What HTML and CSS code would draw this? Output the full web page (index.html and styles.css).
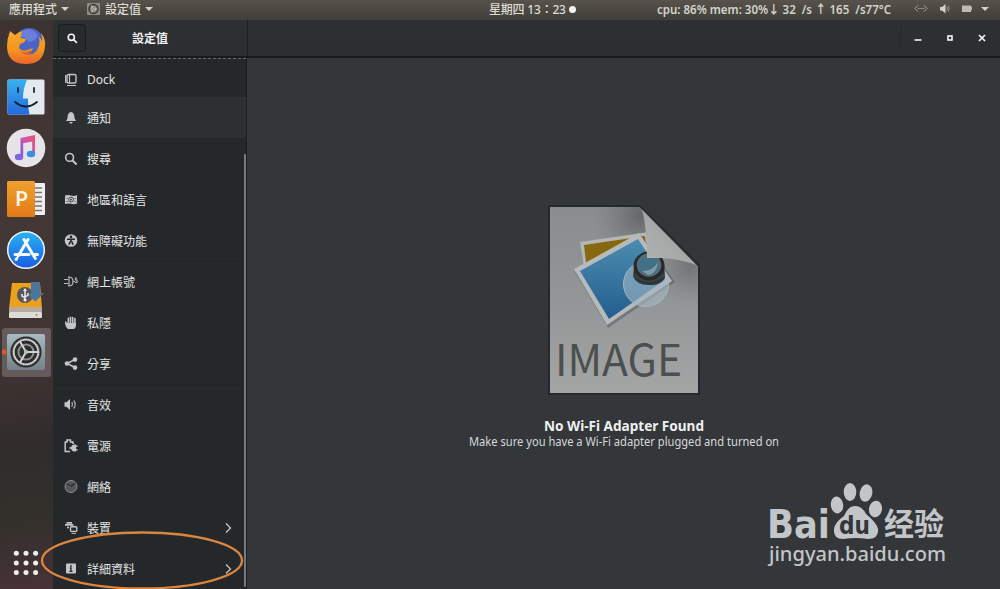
FILE: index.html
```html
<!DOCTYPE html>
<html lang="zh-Hant">
<head>
    <meta charset="UTF-8">
    <meta name="viewport" content="width=device-width, initial-scale=1.0">
    <title>設定值</title>
    <link rel="stylesheet" href="styles.css">
</head>
<body>

    <header class="topbar">
        <div class="topbar-left">
            <span>應用程式</span>
            <i class="arrow"></i>
            <svg class="app-icon" width="13" height="13" viewBox="0 0 13 13">
                <rect width="13" height="12" rx="1" fill="#8e8c86"/>
                <circle cx="6.5" cy="6" r="4.6" fill="#6b6963" stroke="#3b3935" stroke-width="1.3"/>
                <circle cx="6.5" cy="6" r="2.4" fill="none" stroke="#c9c7c1" stroke-width=".8"/>
                <path d="M6.5 6H10M6.5 6l-2-3.500M6.5 6l-2 3.500" stroke="#d6d4ce" stroke-width=".8"/>
            </svg>
            <span>設定值</span>
            <i class="arrow"></i>
        </div>
        <div class="clock">星期四 13：23<i class="dot"></i></div>
        <div class="stats">
            <svg width="240" height="20" viewBox="0 0 240 20"><text x="0" y="14" textLength="234" lengthAdjust="spacingAndGlyphs" xml:space="preserve">cpu: 86% mem: 30%↓ 32  /s ↑ 165  /s77°C</text></svg>
        </div>
        <div class="tray">
            <svg width="14" height="10" viewBox="0 0 14 10" fill="none" stroke="#aaa8a0"><path d="M4 1.500L1 4.500l3 3M10 1.500l3 3-3 3M4 4.500h1.500M6.400 4.500h1.500M8.700 4.500h1.500"/></svg>
            <svg width="10" height="10" viewBox="0 0 10 10"><path d="M0 3h2L5.500 0v9.500L2 6.500H0z" fill="#d4d2cc"/><path d="M6.800 3q1.200 1.700 0 3.500M8.200 1.700q2 3 0 6" fill="none" stroke="#97958e"/></svg>
            <svg width="10" height="10" viewBox="0 0 10 10"><path d="M0 1.500h9v1.300h1v3.500H9V8H0z" fill="#bcbab3"/></svg>
            <i class="arrow"></i>
        </div>
    </header>

    <div class="desktop">
        <nav class="dock">
            <div class="dock-item">
                <svg width="40" height="40" viewBox="0 0 40 40">
                    <defs><linearGradient id="fox" x1="0" y1="0" x2="0" y2="1"><stop offset="0" stop-color="#f6a92a"/><stop offset=".55" stop-color="#f5961f"/><stop offset="1" stop-color="#e9652a"/></linearGradient></defs>
                    <circle cx="23" cy="17" r="15" fill="#4a63c4"/>
                    <path d="M18 4q8-3 14 5l-3 5-6 2-5-5-5 1z" fill="#6a7fdc"/>
                    <path d="M4 5l5 4q3-3 8-4-2 2-2 5l-1 2q3 0 6 1 0 3-6 5l-1 4q3 4 8 2l6-2q-2 6-7 6 9 2 12-6 3-7 0-12 3 2 4 6 1-4-1-9 5 6 4 13-1 18-19 18Q1 38 1 20q0-7 3-15z" fill="url(#fox)"/>
                    <path d="M13 23q3 5 8 3l5-2-3 4q-7 2-10-5z" fill="#dd5f1e"/>
                </svg>
            </div>
            <div class="dock-item">
                <svg width="38" height="36" viewBox="0 0 38 36">
                    <defs><linearGradient id="face" x1="0" y1="0" x2="0" y2="1"><stop offset="0" stop-color="#38b2ee"/><stop offset="1" stop-color="#2269df"/></linearGradient></defs>
                    <rect x=".5" y=".5" width="37" height="35" rx="1.5" fill="#e2e9ef"/>
                    <path d="M2 .5h18q-4 9-4 19h5q-.4 8 1.500 16H2q-1.500 0-1.500-1.500V2Q.5.5 2 .5z" fill="url(#face)"/>
                    <path d="M11 9v4M27 9v4" stroke="#1d2735" stroke-width="1.8" stroke-linecap="round"/>
                    <path d="M8 23q11 9 22 0" fill="none" stroke="#15202e" stroke-width="1.8" stroke-linecap="round"/>
                </svg>
            </div>
            <div class="dock-item">
                <svg width="40" height="40" viewBox="0 0 40 40">
                    <defs><linearGradient id="note" x1="1" y1="0" x2="0" y2="1"><stop offset="0" stop-color="#f4505e"/><stop offset=".5" stop-color="#cc55b6"/><stop offset="1" stop-color="#6c61d8"/></linearGradient></defs>
                    <circle cx="20" cy="20" r="19.3" fill="#e6e4e8"/>
                    <path d="M14.500 10l14.500-3v19h-2.800V13.500l-9 1.800V29h-2.700z" fill="url(#note)"/>
                    <ellipse cx="13" cy="29" rx="4.200" ry="3.300" fill="#8065dc"/>
                    <ellipse cx="25" cy="26" rx="4.200" ry="3.300" fill="#378fe4"/>
                </svg>
            </div>
            <div class="dock-item">
                <svg width="40" height="38" viewBox="0 0 40 38">
                    <defs><linearGradient id="ppt" x1="0" y1="0" x2="0" y2="1"><stop offset="0" stop-color="#f0a02e"/><stop offset="1" stop-color="#e27b16"/></linearGradient></defs>
                    <rect x="26" y="3" width="13" height="32" rx="1" fill="#efefed"/>
                    <path d="M29 8h7M29 12.500h7M29 17h7M29 21.500h7M29 26h7M29 30.500h7" stroke="#777473" stroke-width="1.4"/>
                    <rect x="1" y="1" width="28" height="36" rx="1.5" fill="url(#ppt)"/>
                    <text x="9.3" y="26" class="ppt-letter">P</text>
                </svg>
            </div>
            <div class="dock-item">
                <svg width="40" height="40" viewBox="0 0 40 40">
                    <defs><linearGradient id="store" x1="0" y1="0" x2="0" y2="1"><stop offset="0" stop-color="#28b3f2"/><stop offset="1" stop-color="#195ce2"/></linearGradient></defs>
                    <circle cx="20" cy="20" r="18.3" fill="url(#store)" stroke="#eef4fa" stroke-width="1.5"/>
                    <path d="M18 9.500l11.300 19M22 9.500L12.200 26M9 24.500h14M27 24.500h4.500M10.700 28.500l-.6 1" stroke="#f6fafd" stroke-width="3" stroke-linecap="round"/>
                </svg>
            </div>
            <div class="dock-item">
                <svg width="38" height="40" viewBox="0 0 38 40">
                    <path d="M5 2h28l2 26H2z" fill="#eca11d"/>
                    <path d="M2.300 26h32.400l.3 5H2z" fill="#b6aaa0"/>
                    <rect x="2" y="31" width="33" height="6" rx="1" fill="#dcdcdb"/>
                    <circle cx="29.5" cy="34" r="1" fill="#7ba35b"/>
                    <circle cx="18" cy="14" r="8" fill="#54565a"/>
                    <path d="M18 9v11M15 13v2l3 2M21 12v2l-3 2" stroke="#ececec" stroke-width="1.5" fill="none"/>
                    <circle cx="18" cy="19" r="1.6" fill="#ececec"/><path d="M16 10l2-3 2 3z" fill="#ececec"/>
                    <path d="M24 1h9v11h4l-8.500 8.500-7-6L24 12z" fill="#4b759d"/>
                </svg>
            </div>
            <div class="dock-item">
                <div class="dock-active">
                    <svg width="38" height="36" viewBox="0 0 38 36">
                        <defs><linearGradient id="steel" x1="0" y1="0" x2="0" y2="1"><stop offset="0" stop-color="#a9bac2"/><stop offset="1" stop-color="#758087"/></linearGradient></defs>
                        <rect width="38" height="36" rx="2" fill="url(#steel)"/>
                        <circle cx="19" cy="18" r="15.6" fill="#2b2d2f"/>
                        <circle cx="19" cy="18" r="12.3" fill="none" stroke="#d2d2cf" stroke-width="1.8"/>
                        <circle cx="19" cy="18" r="13.5" fill="none" stroke="#999" stroke-width="1" stroke-dasharray="1 1.1"/>
                        <circle cx="19" cy="18" r="7.6" fill="none" stroke="#8d9090" stroke-width="2"/>
                        <path d="M19 18h12M19 18L13 7.500M19 18l-6 10.500" stroke="#d2d2cf" stroke-width="2"/>
                        <circle cx="19" cy="18" r="2.2" fill="#b8b9b7"/>
                    </svg>
                </div>
            </div>
            <svg class="app-grid" width="26" height="26" viewBox="0 0 26 26" fill="#f1efed">
                <circle cx="3.3" cy="3.3" r="2.5"/><circle cx="13" cy="3.3" r="2.5"/><circle cx="22.6" cy="3.3" r="2.5"/>
                <circle cx="3.3" cy="13" r="2.5"/><circle cx="13" cy="13" r="2.5"/><circle cx="22.6" cy="13" r="2.5"/>
                <circle cx="3.3" cy="22.6" r="2.5"/><circle cx="13" cy="22.6" r="2.5"/><circle cx="22.6" cy="22.6" r="2.5"/>
            </svg>
        </nav>

        <div class="window">
            <div class="titlebar">
                <div class="title-left">
                    <button class="search-btn"><svg width="11" height="11" viewBox="0 0 11 11" fill="none" stroke="#f1f1f1" stroke-width="1.6"><circle cx="4.3" cy="4.3" r="3.1"/><path d="M6.600 6.600l3.300 3.300"/></svg></button>
                    <h1>設定值</h1>
                </div>
                <div class="controls">
                    <svg width="8" height="8" viewBox="0 0 8 8"><path d="M.5 6h7" stroke="#f4f4f4" stroke-width="1.6"/></svg>
                    <svg width="8" height="8" viewBox="0 0 8 8"><rect x="2" y="2" width="4" height="4" fill="none" stroke="#f4f4f4" stroke-width="1.6"/></svg>
                    <svg width="8" height="8" viewBox="0 0 8 8"><path d="M1 1l6 6M7 1L1 7" stroke="#f4f4f4" stroke-width="1.7"/></svg>
                </div>
            </div>

            <div class="body">
                <aside class="sidebar">
                    <div class="row first"><svg viewBox="0 0 14 14"><rect x="3" y="1.5" width="9" height="8.5" rx="1.5" fill="none" stroke="#c3c5c6" stroke-width="1.4"/><path d="M1.700 2v8M5.500 2v7.500M3 12.500h9" stroke="#c3c5c6" stroke-width="1.2"/></svg><span>Dock</span></div>
                    <div class="row hover"><svg viewBox="0 0 14 14"><path d="M7 1Q3.800 1.400 3.600 6 3.500 8.500 2 10h10q-1.500-1.500-1.600-4Q10.200 1.400 7 1zM5 11h4l-2 2z" fill="#c3c5c6"/></svg><span>通知</span></div>
                    <div class="row"><svg viewBox="0 0 14 14"><circle cx="5.6" cy="5.4" r="3.9" fill="none" stroke="#c3c5c6" stroke-width="1.6"/><path d="M8.300 8.200l4.300 4.300" stroke="#c3c5c6" stroke-width="2"/></svg><span>搜尋</span></div>
                    <div class="row"><svg viewBox="0 0 14 14"><path d="M1 2.500q3-1 6 0t6-.5v8.500q-3 1.200-6 .3T1 11z" fill="#c3c5c6"/><circle cx="7" cy="6.6" r="2.4" fill="none" stroke="#45494b"/><circle cx="7" cy="6.6" r=".9" fill="#303436"/><path d="M3 5v1M3 8v1M11 5v1M11 8v1" stroke="#45494b"/></svg><span>地區和語言</span></div>
                    <div class="row"><svg viewBox="0 0 14 14"><circle cx="7" cy="6.5" r="6.3" fill="#c3c5c6"/><circle cx="7" cy="2.9" r="1.3" fill="#24282a"/><path d="M3 5.200l8 0M7 5v3M6.200 7.500L5 10.800M7.800 7.500L9 10.800" stroke="#24282a" stroke-width="1.6"/></svg><span>無障礙功能</span></div>
                    <div class="row group"><svg viewBox="0 0 14 14" fill="none" stroke="#b4b6b7" stroke-width="1.2"><path d="M4 2h1q4 0 4 4.500T5 11H4M5 2v9M0 4.500h4M0 8.500h4M9 6.500h2M13 3h-1.500v2H13v2.500h-2"/></svg><span>網上帳號</span></div>
                    <div class="row"><svg viewBox="0 0 14 14"><path d="M4.300 8V2.300M6.500 7V1.300M8.700 7V1.500M10.900 8V2.500" stroke="#c3c5c6" stroke-width="1.6" stroke-linecap="round"/><path d="M1 5.500q1-1 2 1.500h9v3q-.5 2-2 3H4Q1 11 1 5.500z" fill="#c3c5c6"/></svg><span>私隱</span></div>
                    <div class="row"><svg viewBox="0 0 14 14"><path d="M11 2.500L3 6.500l8 4" fill="none" stroke="#c3c5c6" stroke-width="1.4"/><g fill="#c3c5c6"><circle cx="3" cy="6.5" r="2.3"/><circle cx="11" cy="2.6" r="2.3"/><circle cx="11" cy="10.6" r="2.3"/></g></svg><span>分享</span></div>
                    <div class="row group"><svg viewBox="0 0 14 14"><path d="M.5 4.200h2L6 1v11L2.500 8.800h-2z" fill="#c3c5c6"/><path d="M7.800 4.200q1.400 2.300 0 4.600M9.700 2.500q3 4 0 8" fill="none" stroke="#aeb0b1" stroke-width="1.3"/></svg><span>音效</span></div>
                    <div class="row"><svg viewBox="0 0 14 14"><path d="M6 12.500H1.200V3H3V1h3.500v2H9v2" fill="none" stroke="#c3c5c6" stroke-width="1.5"/><path d="M13.500 6.500H12V5.500H9.500Q7.500 6 7 8.200H5.300v1.600H7Q7.500 12 9.500 12.500H12v-1h1.500V10H12V8h1.500z" fill="#c3c5c6"/></svg><span>電源</span></div>
                    <div class="row"><svg viewBox="0 0 14 14"><circle cx="7" cy="6.5" r="6" fill="#54585a" stroke="#8b8e90"/><path d="M7 7l4.500-4M2.500 4q4 3 7 0" stroke="#26292b" fill="none"/></svg><span>網絡</span></div>
                    <div class="row"><svg viewBox="0 0 14 14" fill="none" stroke="#c3c5c6"><path d="M1 3.800h8.500M2.500 1.800h5.500M3 6.500h2" stroke-width="1.7"/><rect x="6.5" y="5.8" width="6.3" height="4.6" rx="1" stroke-width="1.4"/><path d="M7.500 12.300h4.500"/></svg><span>裝置</span><svg class="chevron" viewBox="0 0 8 12"><path d="M2 1.500l4.500 4.500L2 10.500" fill="none" stroke="#c6c8c8" stroke-width="1.3"/></svg></div>
                    <div class="row"><svg viewBox="0 0 14 14"><rect x="2" y="1.5" width="10" height="10" rx="1" fill="#c3c5c6"/><path d="M7 3v2M5.800 6H7v3M5.500 9.300h3" stroke="#26292b" stroke-width="1.3" fill="none"/></svg><span>詳細資料</span><svg class="chevron" viewBox="0 0 8 12"><path d="M2 1.500l4.500 4.500L2 10.500" fill="none" stroke="#c6c8c8" stroke-width="1.3"/></svg></div>
                    <div class="scrollbar"></div>
                </aside>

                <main class="content">
                    <svg class="image-file" width="156" height="194" viewBox="0 0 156 194">
                        <defs>
                            <linearGradient id="paper" x1="0" y1="0" x2="0" y2="1"><stop offset="0" stop-color="#8a8d8d"/><stop offset=".5" stop-color="#939696"/><stop offset="1" stop-color="#a3a6a5"/></linearGradient>
                            <linearGradient id="curl" x1="0" y1="1" x2="1" y2="0"><stop offset="0" stop-color="#b0b4b3"/><stop offset=".45" stop-color="#a6a9a8"/><stop offset="1" stop-color="#646969"/></linearGradient>
                            <linearGradient id="blue" x1="0" y1="0" x2="0" y2="1"><stop offset="0" stop-color="#4b8caf"/><stop offset="1" stop-color="#235e8e"/></linearGradient>
                            <radialGradient id="shade" cx="94" cy="12" r="48" gradientUnits="userSpaceOnUse"><stop offset="0" stop-color="#555a5b" stop-opacity=".75"/><stop offset="1" stop-color="#707575" stop-opacity="0"/></radialGradient>
                            <radialGradient id="shade2" cx="144" cy="64" r="40" gradientUnits="userSpaceOnUse"><stop offset="0" stop-color="#5b6060" stop-opacity=".6"/><stop offset="1" stop-color="#707575" stop-opacity="0"/></radialGradient>
                        </defs>
                        <path d="M3 3h91l59 59v129H3z" fill="url(#paper)" stroke="#24292c" stroke-width="2"/>
                        <path d="M4 4h90l58 58v128H4z" fill="url(#shade)"/>
                        <path d="M4 4h90l58 58v128H4z" fill="url(#shade2)"/>
                        <path d="M34 39l69-10 5 50-66 10z" fill="#b4b7b5"/>
                        <path d="M38 42l61-9 4 43-60 9z" fill="#85680f"/>
                        <path d="M29 69l66-37 34 47-67 46z" fill="#50585b" opacity=".5"/>
                        <path d="M28 66l65-36 33 48-65 44z" fill="#b7babb"/>
                        <path d="M34 68l58-32 27 41-56 39z" fill="url(#blue)"/>
                        <circle cx="100" cy="81" r="22.5" fill="#a3b7c5" fill-opacity=".6" stroke="#a7b6be"/>
                        <path d="M89 58h29l1 17q-5 8-16 7-13 0-16-9z" fill="#303637"/>
                        <path d="M88 71q13 12 30 1" fill="none" stroke="#3c4446" stroke-width="3"/>
                        <ellipse cx="103" cy="63" rx="15.5" ry="14.5" fill="#252b2d"/>
                        <ellipse cx="103" cy="62" rx="11.5" ry="11" fill="#417087" stroke="#626b6e" stroke-width="1.5"/>
                        <path d="M96 68q11 0 16-9-1 12-10 13z" fill="#9aabb2" opacity=".7"/>
                        <path d="M94 3q6 8 7 52h14q17 0 38 8z" fill="url(#curl)"/>
                        <path d="M94 3l59 60" stroke="#282d30" stroke-width="2"/>
                        <text x="9" y="173" textLength="127" lengthAdjust="spacingAndGlyphs">IMAGE</text>
                    </svg>
                    <svg class="message" width="330" height="38" viewBox="0 0 330 38">
                        <text class="heading" x="85" y="17" textLength="160" lengthAdjust="spacingAndGlyphs">No Wi-Fi Adapter Found</text>
                        <text x="10" y="31.5" textLength="310" lengthAdjust="spacingAndGlyphs">Make sure you have a Wi-Fi adapter plugged and turned on</text>
                    </svg>
                </main>
            </div>
        </div>
    </div>

    <svg class="marker" width="204" height="59" viewBox="0 0 204 59">
        <ellipse cx="102" cy="29.5" rx="100" ry="28" fill="none" stroke="#dc853f" stroke-width="2.3"/>
    </svg>

    <svg class="watermark" width="184" height="96" viewBox="0 0 184 96">
        <g fill="#c3c6c8">
            <text class="bai" x="0" y="58.5" textLength="63" lengthAdjust="spacingAndGlyphs">Bai</text>
            <ellipse cx="70" cy="26" rx="6.2" ry="8.5" transform="rotate(-8 70 26)"/>
            <ellipse cx="83" cy="13" rx="6.3" ry="9"/>
            <ellipse cx="99" cy="14" rx="6.3" ry="8.8" transform="rotate(12 99 14)"/>
            <ellipse cx="108.5" cy="30" rx="6.5" ry="8.3" transform="rotate(10 108.5 30)"/>
            <path d="M88 27q7 0 11 8 11 9 12 15 1 10-10 10-6-1-12-1t-13 1q-10 0-9-10 1-7 10-13 4-10 11-10z"/>
            <text class="jingyan" x="117" y="56" textLength="60" lengthAdjust="spacingAndGlyphs">经验</text>
            <text class="domain" x="2" y="82" textLength="177" lengthAdjust="spacingAndGlyphs">jingyan.baidu.com</text>
        </g>
        <text class="du" x="72" y="54.5" textLength="31" lengthAdjust="spacingAndGlyphs">du</text>
    </svg>

</body>
</html>
```

FILE: styles.css
```css
* {
    box-sizing: border-box;
}
body {
    margin: 0;
    width: 1000px;
    height: 589px;
    overflow: hidden;
    position: relative;
    font-family: "Noto Sans", "Noto Sans CJK TC", sans-serif;
    font-size: 12px;
    color: #e4e5e4;
    background: #33373a;
}
svg {
    display: block;
    flex: none;
}
.topbar {
    display: grid;
    grid-template-columns: 489px 168px 257px 1fr;
    height: 20px;
    background: linear-gradient(#57534b, #403e39);
    line-height: 20px;
    font-weight: 500;
    color: #dddad3;
    white-space: nowrap;
}
.topbar-left, .clock, .tray {
    display: flex;
    align-items: center;
    height: 20px;
}
.topbar-left {
    padding-left: 9px;
}
.clock {
    letter-spacing: -0.2px;
}
.arrow {
    width: 0;
    height: 0;
    border: 4px solid transparent;
    border-top-color: #d3d0c8;
    border-bottom: 0;
    margin: 0 0 2px 4px;
}
.app-icon {
    margin: 0 5px 2px 18px;
}
.dot {
    width: 7px;
    height: 7px;
    border-radius: 50%;
    background: #f3f2ee;
    margin: 0 0 2px 3px;
}
.stats text {
    font-size: 12px;
    font-weight: 600;
    fill: #d5d2cb;
    white-space: pre;
}
.tray {
    gap: 12px;
    padding-bottom: 2px;
}
.tray .arrow {
    margin: 0 0 0 -3px;
}
.desktop {
    display: flex;
    height: 569px;
}
.dock {
    width: 53px;
    display: flex;
    flex-direction: column;
    align-items: center;
    padding-right: 1px;
    background: linear-gradient(170deg, #3c3331 0%, #443837 35%, #403433 60%, #302c2a 75%, #34302c 88%, #483238 100%);
}
.dock-item {
    height: 51.1px;
    width: 100%;
    display: flex;
    align-items: center;
    justify-content: center;
}
.dock-active {
    width: 49px;
    height: 49px;
    display: flex;
    align-items: center;
    justify-content: center;
    border-radius: 3px;
    background: radial-gradient(circle at 2px 24px, #e2562b 2px, transparent 3px), #655b5a;
}
.ppt-letter {
    font: bold 20px Lato, sans-serif;
    fill: #fff6e8;
}
.app-grid {
    margin-top: auto;
    margin-bottom: 13px;
}
.window {
    flex: 1;
    display: flex;
    flex-direction: column;
}
.titlebar {
    height: 38px;
    display: flex;
    justify-content: space-between;
    background: linear-gradient(#2d3133, #2a2e30);
    border-bottom: 2px solid #181b1c;
}
.title-left {
    width: 195px;
    display: flex;
    border-right: 1px solid #1c1f20;
    padding: 4px 0 0 5px;
}
.search-btn {
    width: 28px;
    height: 28px;
    padding: 0;
    display: flex;
    align-items: center;
    justify-content: center;
    border: 1px solid #1b1e1f;
    border-radius: 3px;
    background: #272b2d;
}
h1 {
    flex: 1;
    margin: 0 35px 0 0;
    padding-left: 2px;
    font-size: 12px;
    line-height: 29px;
    text-align: center;
    color: #f1f1f0;
}
.controls {
    display: flex;
    align-items: center;
    gap: 24px;
    height: 26px;
    margin-top: 5px;
    padding: 0 14px 0 13px;
    border-left: 1px solid #252929;
}
.body {
    flex: 1;
    display: flex;
}
.sidebar {
    position: relative;
    width: 194px;
    background: #24282a;
    border-right: 1px solid #1b1f20;
}
.row {
    display: flex;
    align-items: center;
    height: 41px;
    padding-left: 11px;
}
.row svg {
    width: 14px;
    height: 14px;
    margin-right: 9px;
}
.row.first {
    height: 39px;
    border-top: 1px dashed #646869;
    padding-top: 3px;
}
.row.hover {
    background: #2c3032;
}
.row.group {
    border-top: 1px solid #202426;
}
.row .chevron {
    width: 8px;
    height: 12px;
    margin-left: auto;
    margin-right: 14px;
}
.scrollbar {
    position: absolute;
    right: 0;
    top: 96px;
    bottom: 2px;
    width: 2px;
    border-radius: 1px;
    background: #777b7c;
}
.content {
    flex: 1;
    display: flex;
    flex-direction: column;
    align-items: center;
    padding-top: 145px;
    background: #33373a;
}
.image-file text {
    font: 43px "Noto Sans CJK SC", sans-serif;
    fill: #4b504f;
}
.message {
    margin-top: 17px;
}
.message text {
    font-size: 12px;
    fill: #d6d8d8;
}
.message .heading {
    font-size: 13.5px;
    font-weight: bold;
    fill: #eff0ef;
}
.marker {
    position: absolute;
    left: 40px;
    top: 531px;
}
.watermark {
    position: absolute;
    left: 767px;
    top: 479px;
}
.watermark .bai {
    font: bold 39px "DejaVu Sans", sans-serif;
}
.watermark .du {
    font: bold 25px "DejaVu Sans", sans-serif;
    fill: #33373a;
}
.watermark .jingyan {
    font: bold 31px "Noto Sans CJK SC", sans-serif;
}
.watermark .domain {
    font: 500 20.5px "Noto Sans", sans-serif;
}
```
